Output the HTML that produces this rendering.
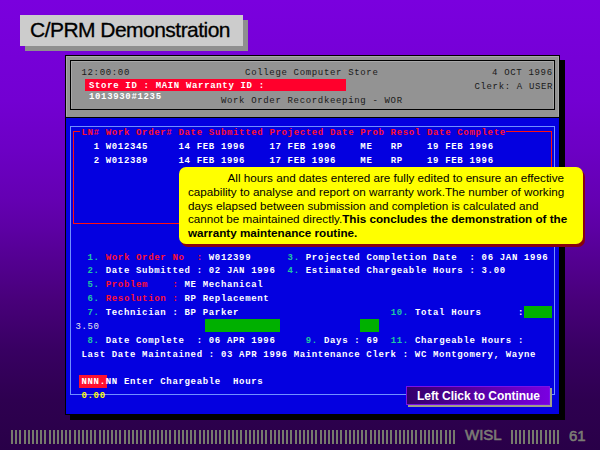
<!DOCTYPE html>
<html><head><meta charset="utf-8">
<style>
html,body{margin:0;padding:0;}
body{width:600px;height:450px;position:relative;overflow:hidden;
 background:linear-gradient(to bottom,rgb(122,0,222) 0px,rgb(115,0,210) 100px,rgb(108,0,196) 150px,rgb(100,0,178) 200px,rgb(94,0,166) 224px,rgb(72,0,122) 300px,rgb(56,0,98) 350px,rgb(46,0,80) 400px,rgb(41,0,72) 450px);
 font-family:"Liberation Sans",sans-serif;}
.a{position:absolute;}
.m{position:absolute;font-family:"Liberation Mono",monospace;font-size:9.0px;line-height:13.75px;white-space:pre;font-weight:bold;letter-spacing:0.660px}
.w{color:#fff;}
.w3{color:#e8e8e8;font-weight:normal}
.r{color:#ff1030;}
.c{color:#20c8a0;}
.k{color:#1a1a1a;font-weight:normal}
.y{color:#ffff00;}
.tt{position:absolute;font-size:11.68px;line-height:13.75px;white-space:pre;color:#000;}
</style></head><body>
<div class="a" style="left:25px;top:20px;width:223px;height:31px;background:#8f8f8f"></div>
<div class="a" style="left:20px;top:15px;width:223px;height:31px;background:#cccccc"></div>
<div class="a" style="left:30px;top:18px;font-size:21px;line-height:24px;letter-spacing:-0.53px;color:#000;white-space:pre;-webkit-text-stroke:0.3px #000">C/PRM Demonstration</div>

<div class="a" style="left:70px;top:60px;width:495px;height:360px;background:#000"></div>
<div class="a" style="left:65px;top:55px;width:493px;height:358px;border:1px solid #000;background:#0400e0"></div>
<div class="a" style="left:66px;top:56px;width:491px;height:59px;background:#939393;border:1px solid #a8a8a8;border-bottom-color:#939393"></div>
<div class="a" style="left:66px;top:117px;width:493px;height:1px;background:#000"></div>
<div class="a" style="left:70px;top:60px;width:483px;height:48px;border:1px solid #000"></div>
<div class="a" style="left:71px;top:61px;width:481px;height:46px;border:1px solid #a8a8a8;border-bottom-color:#939393"></div>
<div class="a" style="left:85px;top:79px;width:261px;height:12px;background:#ff002c"></div>

<div class="m k" style="left:81.50px;top:67.00px;">12:00:00</div>
<div class="m k" style="left:245.12px;top:67.00px;">College Computer Store</div>
<div class="m k" style="left:492.08px;top:67.00px;">4 OCT 1996</div>
<div class="m w" style="left:89.00px;top:80.00px;">Store ID : MAIN Warranty ID :</div>
<div class="m k" style="left:474.40px;top:81.00px;">Clerk: A USER</div>
<div class="m w" style="left:89.00px;top:91.00px;">1013930#1235</div>
<div class="m k" style="left:220.88px;top:95.00px;">Work Order Recordkeeping - WOR</div>
<div class="a" style="left:70px;top:126px;width:483px;height:267px;border:1px solid #7090ff"></div>
<div class="a" style="left:73px;top:131px;width:477px;height:91px;border:1px solid #ff1010"></div>

<div class="a" style="left:80px;top:128px;width:426px;height:8px;background:#0400e0"></div>
<div class="m r" style="left:81.50px;top:127.00px;">LN# Work Order# Date Submitted Projected Date Prob Resol Date Complete</div>
<div class="m w" style="left:81.50px;top:141.00px;">  <span class="w">1</span> <span class="w">W012345</span>     <span class="w">14 FEB 1996</span>    <span class="w">17 FEB 1996</span>    <span class="w">ME</span>   <span class="w">RP</span>    <span class="w">19 FEB 1996</span></div>
<div class="m w" style="left:81.50px;top:155.00px;">  <span class="w">2</span> <span class="w">W012389</span>     <span class="w">14 FEB 1996</span>    <span class="w">17 FEB 1996</span>    <span class="w">ME</span>   <span class="w">RP</span>    <span class="w">19 FEB 1996</span></div>
<div class="a" style="left:179px;top:167px;width:404px;height:77px;background:#ffff00;border-radius:7px;box-shadow:2px 3px 0 #880010"></div>
<div class="tt" style="left:188px;top:171px"><span style="display:inline-block;width:39.5px"></span>All hours and dates entered are fully edited to ensure an effective
capability to analyse and report on warranty work.The number of working
days elapsed between submission and completion is calculated and
cannot be maintained directly.<b>This concludes the demonstration of the</b>
<b>warranty maintenance routine.</b></div>
<div class="a" style="left:205px;top:319px;width:75px;height:13px;background:#00b000"></div>
<div class="a" style="left:360px;top:319px;width:19px;height:13px;background:#00b000"></div>
<div class="a" style="left:524px;top:306px;width:28px;height:12px;background:#00b000"></div>
<div class="a" style="left:79px;top:375px;width:28px;height:13px;background:#ff1030"></div>

<div class="m " style="left:75.44px;top:252.00px;">  <span class="c">1.</span> <span class="r">Work Order No</span>  <span class="r">:</span> <span class="w">W012399</span>      <span class="c">3.</span> <span class="w">Projected Completion Date</span>  <span class="w">:</span> <span class="w">06 JAN 1996</span></div>
<div class="m " style="left:75.44px;top:265.00px;">  <span class="c">2.</span> <span class="w">Date Submitted</span> <span class="w">:</span> <span class="w">02 JAN 1996</span>  <span class="c">4.</span> <span class="w">Estimated Chargeable Hours</span> <span class="w">:</span> <span class="w">3.00</span></div>
<div class="m " style="left:75.44px;top:279.00px;">  <span class="c">5.</span> <span class="r">Problem</span>    <span class="r">:</span> <span class="w">ME Mechanical</span></div>
<div class="m " style="left:75.44px;top:293.00px;">  <span class="c">6.</span> <span class="r">Resolution</span> <span class="r">:</span> <span class="w">RP Replacement</span></div>
<div class="m " style="left:75.44px;top:307.00px;">  <span class="c">7.</span> <span class="w">Technician : BP Parker</span>                         <span class="c">10.</span> <span class="w">Total Hours</span>      <span class="w">:</span></div>
<div class="m " style="left:75.44px;top:321.00px;"><span class="w3">3.50</span></div>
<div class="m " style="left:75.44px;top:335.00px;">  <span class="c">8.</span> <span class="w">Date Complete</span>  <span class="w">:</span> <span class="w">06 APR 1996</span>     <span class="c">9.</span> <span class="w">Days</span> <span class="w">:</span> <span class="w">69</span>  <span class="c">11.</span> <span class="w">Chargeable Hours</span> <span class="w">:</span></div>
<div class="m " style="left:75.44px;top:349.00px;"> <span class="w">Last Date Maintained : 03 APR 1996 Maintenance Clerk : WC Montgomery, Wayne</span></div>
<div class="m " style="left:75.44px;top:376.00px;"> <span class="w">NNN.NN Enter Chargeable  Hours</span></div>
<div class="m " style="left:75.44px;top:390.00px;"> <span class="y">0.00</span></div>
<div class="a" style="left:408px;top:388px;width:144px;height:19px;background:#a0a088"></div>
<div class="a" style="left:406px;top:386px;width:142px;height:17px;border:1px solid #7c10e8;background:linear-gradient(to right,#34006a,#7a00e0)"></div>
<div class="a" style="left:417px;top:388px;white-space:pre;color:#fff;font-weight:bold;font-size:12px;line-height:16px;letter-spacing:-0.05px">Left Click to Continue</div>
<div class="a" style="left:465px;top:426px;color:#7c7c74;-webkit-text-stroke:0.6px #7c7c74;font-weight:normal;font-size:15px;line-height:17px">WISL</div>
<div class="a" style="left:569px;top:427px;color:#7c7c74;-webkit-text-stroke:0.6px #7c7c74;font-weight:normal;font-size:15px;line-height:17px">61</div>
<svg class="a" style="left:0;top:0" width="600" height="450"><g fill="#767a6c"><rect x="11" y="430" width="2" height="14"/><rect x="15" y="430" width="2" height="14"/><rect x="19" y="430" width="2" height="14"/><rect x="24" y="430" width="2" height="14"/><rect x="28" y="430" width="2" height="14"/><rect x="32" y="430" width="2" height="14"/><rect x="36" y="430" width="2" height="14"/><rect x="40" y="430" width="2" height="14"/><rect x="44" y="430" width="2" height="14"/><rect x="49" y="430" width="2" height="14"/><rect x="53" y="430" width="2" height="14"/><rect x="57" y="430" width="2" height="14"/><rect x="61" y="430" width="2" height="14"/><rect x="65" y="430" width="2" height="14"/><rect x="69" y="430" width="2" height="14"/><rect x="74" y="430" width="2" height="14"/><rect x="78" y="430" width="2" height="14"/><rect x="82" y="430" width="2" height="14"/><rect x="86" y="430" width="2" height="14"/><rect x="90" y="430" width="2" height="14"/><rect x="94" y="430" width="2" height="14"/><rect x="99" y="430" width="2" height="14"/><rect x="103" y="430" width="2" height="14"/><rect x="107" y="430" width="2" height="14"/><rect x="111" y="430" width="2" height="14"/><rect x="115" y="430" width="2" height="14"/><rect x="119" y="430" width="2" height="14"/><rect x="124" y="430" width="2" height="14"/><rect x="128" y="430" width="2" height="14"/><rect x="132" y="430" width="2" height="14"/><rect x="136" y="430" width="2" height="14"/><rect x="140" y="430" width="2" height="14"/><rect x="144" y="430" width="2" height="14"/><rect x="149" y="430" width="2" height="14"/><rect x="153" y="430" width="2" height="14"/><rect x="157" y="430" width="2" height="14"/><rect x="161" y="430" width="2" height="14"/><rect x="165" y="430" width="2" height="14"/><rect x="169" y="430" width="2" height="14"/><rect x="174" y="430" width="2" height="14"/><rect x="178" y="430" width="2" height="14"/><rect x="182" y="430" width="2" height="14"/><rect x="186" y="430" width="2" height="14"/><rect x="190" y="430" width="2" height="14"/><rect x="194" y="430" width="2" height="14"/><rect x="199" y="430" width="2" height="14"/><rect x="203" y="430" width="2" height="14"/><rect x="207" y="430" width="2" height="14"/><rect x="211" y="430" width="2" height="14"/><rect x="215" y="430" width="2" height="14"/><rect x="219" y="430" width="2" height="14"/><rect x="224" y="430" width="2" height="14"/><rect x="228" y="430" width="2" height="14"/><rect x="232" y="430" width="2" height="14"/><rect x="236" y="430" width="2" height="14"/><rect x="240" y="430" width="2" height="14"/><rect x="245" y="430" width="2" height="14"/><rect x="249" y="430" width="2" height="14"/><rect x="253" y="430" width="2" height="14"/><rect x="257" y="430" width="2" height="14"/><rect x="261" y="430" width="2" height="14"/><rect x="265" y="430" width="2" height="14"/><rect x="270" y="430" width="2" height="14"/><rect x="274" y="430" width="2" height="14"/><rect x="278" y="430" width="2" height="14"/><rect x="282" y="430" width="2" height="14"/><rect x="286" y="430" width="2" height="14"/><rect x="290" y="430" width="2" height="14"/><rect x="295" y="430" width="2" height="14"/><rect x="299" y="430" width="2" height="14"/><rect x="303" y="430" width="2" height="14"/><rect x="307" y="430" width="2" height="14"/><rect x="311" y="430" width="2" height="14"/><rect x="315" y="430" width="2" height="14"/><rect x="320" y="430" width="2" height="14"/><rect x="324" y="430" width="2" height="14"/><rect x="328" y="430" width="2" height="14"/><rect x="332" y="430" width="2" height="14"/><rect x="336" y="430" width="2" height="14"/><rect x="340" y="430" width="2" height="14"/><rect x="345" y="430" width="2" height="14"/><rect x="349" y="430" width="2" height="14"/><rect x="353" y="430" width="2" height="14"/><rect x="357" y="430" width="2" height="14"/><rect x="361" y="430" width="2" height="14"/><rect x="365" y="430" width="2" height="14"/><rect x="370" y="430" width="2" height="14"/><rect x="374" y="430" width="2" height="14"/><rect x="378" y="430" width="2" height="14"/><rect x="382" y="430" width="2" height="14"/><rect x="386" y="430" width="2" height="14"/><rect x="390" y="430" width="2" height="14"/><rect x="395" y="430" width="2" height="14"/><rect x="399" y="430" width="2" height="14"/><rect x="403" y="430" width="2" height="14"/><rect x="407" y="430" width="2" height="14"/><rect x="411" y="430" width="2" height="14"/><rect x="415" y="430" width="2" height="14"/><rect x="420" y="430" width="2" height="14"/><rect x="424" y="430" width="2" height="14"/><rect x="428" y="430" width="2" height="14"/><rect x="432" y="430" width="2" height="14"/><rect x="436" y="430" width="2" height="14"/><rect x="440" y="430" width="2" height="14"/><rect x="445" y="430" width="2" height="14"/><rect x="449" y="430" width="2" height="14"/><rect x="453" y="430" width="2" height="14"/><rect x="511" y="430" width="2" height="14"/><rect x="515" y="430" width="2" height="14"/><rect x="519" y="430" width="2" height="14"/><rect x="523" y="430" width="2" height="14"/><rect x="528" y="430" width="2" height="14"/><rect x="532" y="430" width="2" height="14"/><rect x="536" y="430" width="2" height="14"/><rect x="540" y="430" width="2" height="14"/><rect x="545" y="430" width="2" height="14"/><rect x="549" y="430" width="2" height="14"/><rect x="553" y="430" width="2" height="14"/><rect x="557" y="430" width="2" height="14"/></g></svg>
</body></html>
